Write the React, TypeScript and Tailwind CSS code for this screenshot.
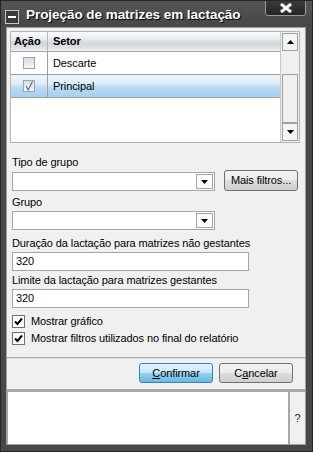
import React from "react";

function TriUp() {
  return (
    <svg width="7" height="4" viewBox="0 0 7 4">
      <path d="M0 4h7L3.5 0z" fill="#000" />
    </svg>
  );
}
function TriDown() {
  return (
    <svg width="7" height="4" viewBox="0 0 7 4">
      <path d="M0 0h7L3.5 4z" fill="#000" />
    </svg>
  );
}

function Combo() {
  return (
    <div className="w-[203px] h-[19px] bg-white border border-[#a5a5a5] flex justify-end p-[1px]">
      <div className="w-[17px] h-full border border-[#a5a5a5] bg-[#fafafa] flex items-center justify-center pt-[1px]">
        <TriDown />
      </div>
    </div>
  );
}

function Input({ value }: { value: string }) {
  return (
    <div className="w-[237px] h-[19px] bg-white border border-[#a5a5a5] flex items-center pl-[3px] text-[11px] leading-[13px] text-black">
      {value}
    </div>
  );
}

function FormCheck({ label }: { label: string }) {
  return (
    <div className="flex items-center h-[13px]">
      <div className="w-[13px] h-[13px] border border-[#707070] bg-white flex items-center justify-center">
        <svg width="9" height="9" viewBox="0 0 9 9">
          <path d="M1 4.5 L3.5 7 L8 1.5" stroke="#000" strokeWidth="2" fill="none" />
        </svg>
      </div>
      <span className="ml-[6px] text-[11px] leading-[13px] text-black">{label}</span>
    </div>
  );
}

function TableCheck({ checked }: { checked?: boolean }) {
  return (
    <div className="w-[12px] h-[12px] border border-[#9aa3b0] bg-[linear-gradient(to_bottom,#d8dde4,#f4f6f8)] flex items-center justify-center">
      {checked && (
        <svg width="10" height="10" viewBox="0 0 10 10">
          <path d="M2 5 L4.2 9 L8.5 0.5" stroke="#5a58a8" strokeWidth="1.1" fill="none" />
        </svg>
      )}
    </div>
  );
}

export default function App() {
  return (
    <div className="w-[313px] h-[452px] bg-[#484848] border border-[#262626] flex flex-col font-['Liberation_Sans',Arial,sans-serif] tracking-[-0.1px] overflow-hidden">
      {/* Title bar */}
      <div className="relative h-[26px] shrink-0 bg-[linear-gradient(to_bottom,#555555,#474747)]">
        <div className="absolute left-[4px] top-[9px] w-[14px] h-[14px] border border-[#c8c8c8] bg-[#3a3a3a] flex items-center justify-center">
          <div className="w-[8px] h-[2px] bg-white" />
        </div>
        <div className="absolute left-[25px] top-[5px] text-[13.5px] leading-[17px] font-bold tracking-[-0.05px] text-white [text-shadow:1px_1px_1px_#000]">
          Projeção de matrizes em lactação
        </div>
        <div className="absolute right-[6px] top-[-1px] w-[41px] h-[16px] border border-[#9a9a9a] rounded-b-[3px] bg-[linear-gradient(to_bottom,#3a3a3a,#262626)] flex items-center justify-center">
          <svg width="14" height="10" viewBox="0 0 14 10">
            <path d="M2 1 L12 9 M12 1 L2 9" stroke="#7a7a7a" strokeWidth="4" />
            <path d="M2 1 L12 9 M12 1 L2 9" stroke="#ffffff" strokeWidth="2.4" />
          </svg>
        </div>
      </div>

      {/* Client */}
      <div className="flex-1 ml-[5px] mr-[6px] mb-[6px] bg-[#f0f0f0] border border-[#a0a0a0] flex flex-col text-black">
        {/* Table */}
        <div className="ml-[3px] mt-[3px] w-[290px] h-[112px] border border-[#b4b4b4] bg-white flex">
          <div className="flex-1 flex flex-col">
            <div className="h-[20px] flex bg-[linear-gradient(to_bottom,#fafafa_0%,#eef0f3_30%,#cfd6dd_60%,#dfe3e7_85%,#f0f0f0_100%)] border-b border-[#a8a8a8]">
              <div className="w-[37px] border-r border-[#b8b8b8] flex items-center pl-[3px] text-[11px] font-bold">Ação</div>
              <div className="flex-1 flex items-center pl-[5px] text-[11px] font-bold">Setor</div>
            </div>
            <div className="h-[23px] flex border-b border-[#a0a0a0]">
              <div className="w-[37px] border-r border-[#a0a0a0] flex items-center justify-center">
                <TableCheck />
              </div>
              <div className="flex-1 flex items-center pl-[5px] text-[11px]">Descarte</div>
            </div>
            <div className="h-[23px] flex border-b border-[#a0a0a0] bg-[linear-gradient(to_bottom,#eef6fd_0%,#dcedfa_40%,#bcdcf3_55%,#a6cfee_100%)]">
              <div className="w-[37px] border-r border-[#a0a0a0] flex items-center justify-center">
                <TableCheck checked />
              </div>
              <div className="flex-1 flex items-center pl-[5px] text-[11px]">Principal</div>
            </div>
            <div className="flex-1" />
          </div>
          <div className="w-[19px] border-l border-[#c8c8c8] bg-[#f0f0f0] flex flex-col p-[1px]">
            <div className="h-[18px] border border-[#a0a0a0] bg-[#f4f4f4] flex items-center justify-center">
              <TriUp />
            </div>
            <div className="h-[23px]" />
            <div className="flex-1 border border-[#a0a0a0] bg-[#f0f0f0]" />
            <div className="h-[18px] border border-[#a0a0a0] bg-[#f4f4f4] flex items-center justify-center">
              <TriDown />
            </div>
          </div>
        </div>

        {/* Form */}
        <div className="pl-[5px] flex flex-col">
          <div className="mt-[13px] text-[11px] leading-[13px]">Tipo de grupo</div>
          <div className="mt-[1px] flex items-end">
            <Combo />
            <div className="ml-[9px] w-[74px] h-[21px] rounded-[3px] border border-[#707070] bg-[linear-gradient(to_bottom,#f2f2f2_0%,#ebebeb_50%,#dddddd_50%,#cfcfcf_100%)] flex items-center justify-center text-[11px]">
              Mais filtros...
            </div>
          </div>
          <div className="mt-[5px] text-[11px] leading-[13px]">Grupo</div>
          <div className="mt-[2px]">
            <Combo />
          </div>
          <div className="mt-[7px] text-[11px] leading-[13px]">Duração da lactação para matrizes não gestantes</div>
          <div className="mt-[2px]">
            <Input value="320" />
          </div>
          <div className="mt-[3px] text-[11px] leading-[13px]">Limite da lactação para matrizes gestantes</div>
          <div className="mt-[2px]">
            <Input value="320" />
          </div>
          <div className="mt-[7px]">
            <FormCheck label="Mostrar gráfico" />
          </div>
          <div className="mt-[4px]">
            <FormCheck label="Mostrar filtros utilizados no final do relatório" />
          </div>
        </div>

        <div className="mt-[12px] h-[2px] bg-[#a8a8a8] border-b border-[#e0e0e0]" />

        <div className="mt-[4px] h-[20px] flex justify-end gap-[6px] pr-[12px]">
          <div className="w-[74px] h-[20px] rounded-[3px] border border-[#3c7fb1] bg-[linear-gradient(to_bottom,#e5f4fc_0%,#c4e5f6_50%,#98d1ef_50%,#6ab8e2_100%)] flex items-center justify-center text-[11px]">
            <span><span className="underline">C</span>onfirmar</span>
          </div>
          <div className="w-[74px] h-[20px] rounded-[3px] border border-[#707070] bg-[linear-gradient(to_bottom,#f2f2f2_0%,#ebebeb_50%,#dddddd_50%,#cfcfcf_100%)] flex items-center justify-center text-[11px]">
            <span>C<span className="underline">a</span>ncelar</span>
          </div>
        </div>

        <div className="mt-[6px] flex-1 bg-[#a8a8a8] pt-[3px] pl-[1px] flex">
          <div className="flex-1 bg-white" />
          <div className="ml-[2px] w-[15px] bg-[#f0f0f0] flex items-center justify-center text-[11px] text-[#1a1a40]">
            ?
          </div>
        </div>
      </div>
    </div>
  );
}
